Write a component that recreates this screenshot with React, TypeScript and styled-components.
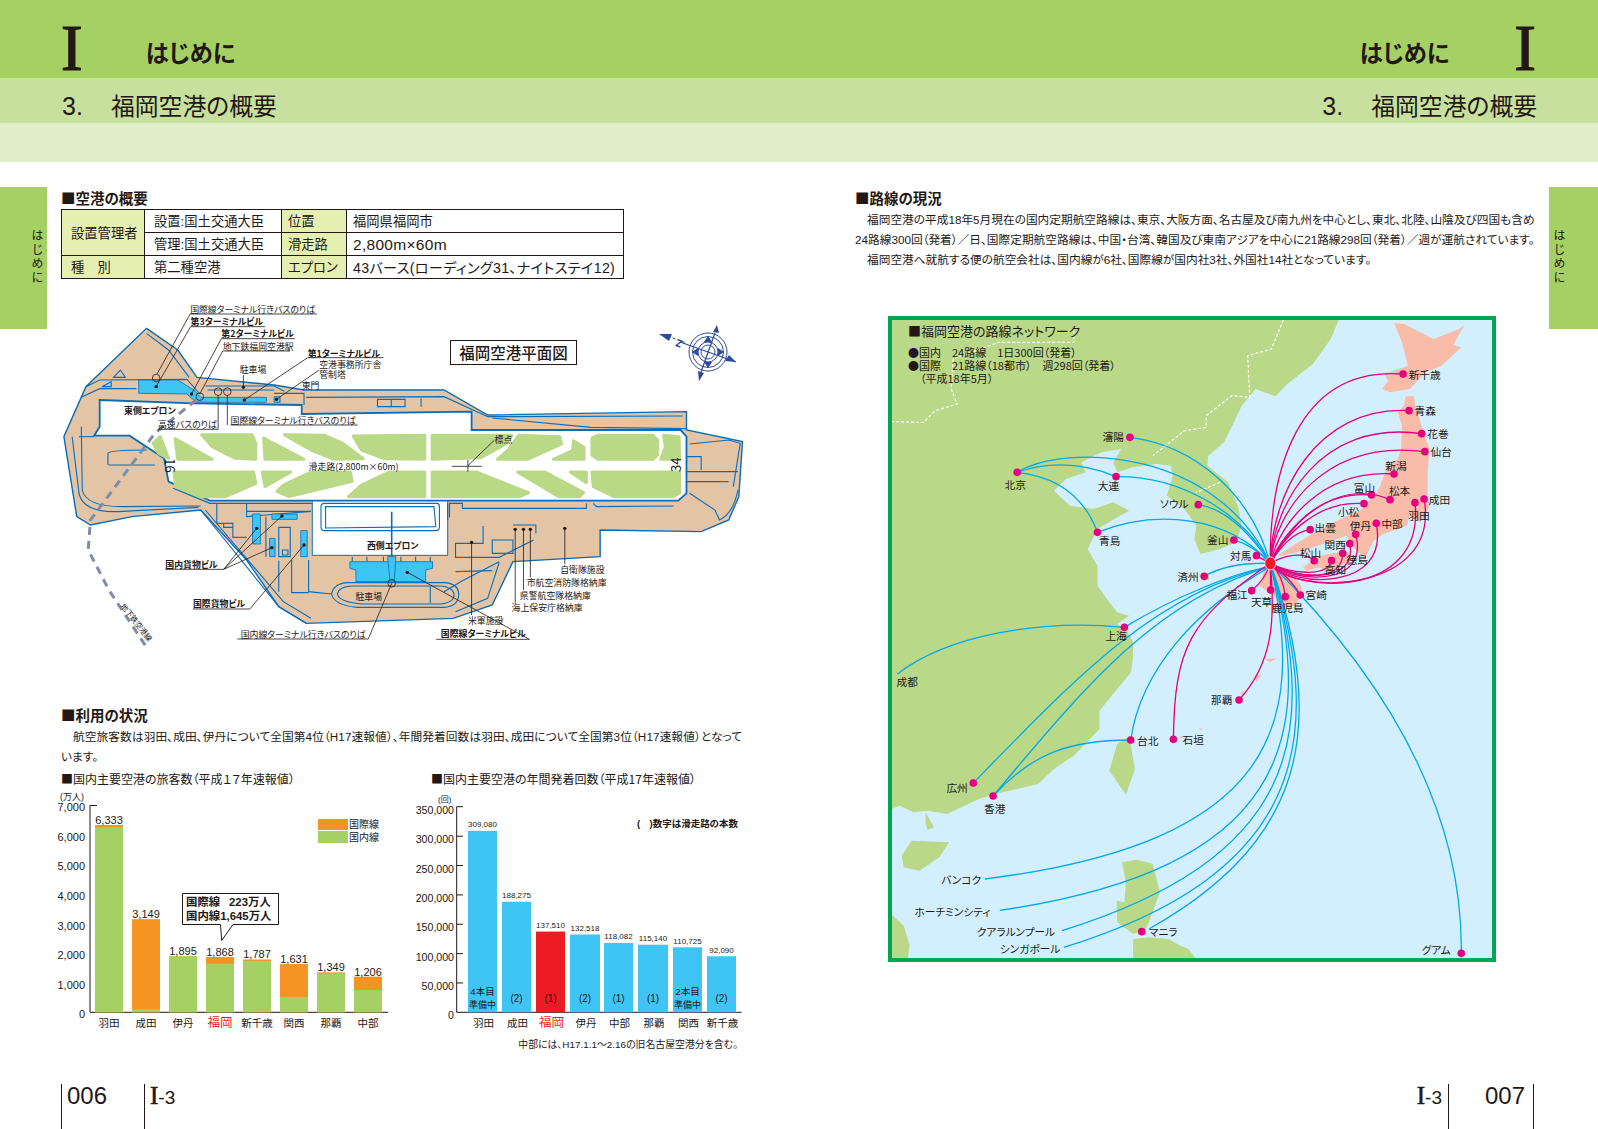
import styled, { createGlobalStyle } from "styled-components";

const SANS = `"Liberation Sans", "Noto Sans CJK JP", sans-serif`;
const CJK = `"Noto Sans CJK JP", "Liberation Sans", sans-serif`;

const GlobalStyle = createGlobalStyle`
  html, body {
    margin: 0;
    padding: 0;
    background: #fff;
  }
  body {
    font-family: ${SANS};
    font-feature-settings: "palt";
    color: #231815;
  }
`;

// ---- airport plan, drawn in crop coordinates (see ax / ay)
const ax = (z: number) => 40 + z / 2.178;
const ay = (z: number) => 290 + z / 3;

const GRASS = [
  "M262 440 L280 505 L258 490 L246 460 Z",
  "M294 446 L375 508 L300 508 Z",
  "M352 434 L462 434 L470 460 L470 508 L425 505 L375 470 Z",
  "M487 444 L575 508 L490 508 Z",
  "M532 434 L620 436 L660 460 L704 506 L640 508 L590 480 Z",
  "M682 438 L838 436 L838 508 L750 506 L700 480 Z",
  "M854 436 L1028 436 L1015 462 L960 503 L854 508 Z",
  "M1042 436 L1132 440 L1136 462 L1062 508 L996 508 L1020 480 Z",
  "M1162 452 L1185 472 L1185 508 L1118 508 L1160 482 Z",
  "M1202 444 L1215 436 L1335 436 L1345 450 L1345 495 L1335 508 L1215 508 L1202 495 Z",
  "M1358 436 L1392 440 L1393 508 L1352 508 L1362 470 Z",
  "M292 546 L465 546 L470 580 L404 620 L335 620 L295 590 Z",
  "M484 546 L546 546 L490 590 Z",
  "M590 546 L676 546 L680 574 L542 620 L516 604 L530 585 Z",
  "M760 546 L838 546 L838 620 L672 620 L700 585 Z",
  "M854 546 L950 546 L1064 608 L1045 620 L854 620 Z",
  "M1040 546 L1100 546 L1184 608 L1175 620 L1130 620 Z",
  "M1155 546 L1190 546 L1190 578 Z",
  "M1202 546 L1393 546 L1393 608 L1380 620 L1250 620 L1205 590 Z",
];

const ROADS = [
  "M232 130 L280 180 L325 262",
  "M100 290 L130 270 L320 268 L348 312",
  "M90 322 L130 296 L210 296",
  "M135 290 L155 275 L155 290 Z",
  "M160 262 L186 262 L175 240 Z",
  "M360 288 L510 288 L532 304",
  "M365 300 L510 300",
  "M510 310 L575 310 L575 345",
  "M580 322 L880 320 L975 380 L1400 378",
  "M985 384 L1200 412 L1408 416",
  "M735 328 L795 328 L795 350 L735 350 Z",
  "M765 328 L765 350",
  "M830 325 L830 350",
  "M70 440 L85 610 Q95 672 180 664 L345 652",
  "M90 410 L92 600 Q100 650 180 650 L350 648",
  "M118 440 L85 440",
  "M148 525 L148 490 Q150 480 232 480",
  "M150 525 L250 525",
  "M290 595 L370 640 L592 640",
  "M385 640 L385 700 L420 700 L420 742 L450 742",
  "M400 700 L400 712 L420 712",
  "M450 640 L450 680 L590 664",
  "M450 664 L590 664",
  "M492 680 L492 800",
  "M520 712 L545 712 L545 800 L520 800 Z",
  "M528 780 L540 780 L540 795 L528 795 Z",
  "M520 812 L520 905",
  "M548 810 L548 908 L585 908",
  "M585 810 L585 905 L635 912",
  "M350 660 L520 950 L580 1000",
  "M360 660 L530 935 L590 985",
  "M615 640 L865 640 Q870 640 870 650 L870 710 Q870 722 860 722 L620 722 Q612 722 612 710 L612 650 Q612 640 620 640 Z",
  "M622 650 L858 650 L862 710 L622 714 Z",
  "M670 878 L880 878 Q912 880 912 915 Q910 950 880 952 L690 952 Q640 945 635 912 Q640 880 670 878",
  "M680 888 L870 888 Q900 890 902 915 Q900 940 870 942 L700 942 Q650 935 648 912 Q650 890 680 888",
  "M850 890 L850 940",
  "M680 800 L680 815 M712 800 L712 815 M748 800 L748 815 M786 800 L786 815 M818 800 L818 815 M850 800 L850 815",
  "M888 640 L888 690",
  "M892 682 L892 640 L920 640 L920 655 L1190 655 L1190 640",
  "M1205 640 L1212 650 L1380 648",
  "M965 708 L965 760 L905 760 L905 802 L1000 802 L1075 750",
  "M1030 705 L1080 705 L1080 730",
  "M985 750 L1030 750 L1030 790 L985 790 Z",
  "M1000 815 L920 872 L880 905",
  "M905 845 L985 842",
  "M1000 818 L975 925 L905 965",
  "M1415 462 L1500 450 L1525 460 L1510 590",
  "M1408 545 L1520 545",
  "M1408 575 L1500 575",
  "M1415 610 L1470 660 L1480 690 Q1510 670 1520 600",
  "M1440 540 L1440 500 L1408 500",
];

const AIRPORT_LEADERS = [
  "M327 72 L603 72 M327 72 L255 252",
  "M328 110 L490 110 M328 110 L253 290",
  "M395 146 L555 146 M395 146 L330 312",
  "M398 183 L545 183 M398 183 L348 312",
  "M583 203 L748 203 M583 203 L445 330",
  "M608 240 L515 328",
  "M443 255 L443 292",
  "M257 418 L388 418 L388 316",
  "M415 405 L692 405 M408 405 L408 316",
  "M990 450 L932 527",
  "M897 529 L962 529 M932 510 L932 545",
  "M273 838 L400 838 L472 715 M400 838 L505 773 M400 838 L527 678",
  "M333 957 L457 957 L575 765",
  "M1143 715 L1143 822",
  "M1068 718 L1068 862",
  "M1053 718 L1053 900",
  "M1035 718 L1035 938",
  "M940 757 L940 975",
  "M430 1047 L715 1047 L766 880",
  "M863 1048 L1066 1048 L800 847",
];

const AIRPORT_DOTS = [
  [253, 290], [330, 312], [445, 330], [515, 328], [443, 292], [472, 715], [505, 773],
  [527, 678], [575, 765], [1143, 715], [1068, 718], [1053, 718], [1035, 718], [940, 757], [800, 847],
];

const AIRPORT_RINGS = [[253, 264], [348, 320], [388, 305], [408, 305], [766, 880]];

const AIRPORT_LABELS: { t: string; x: number; y: number; b?: boolean }[] = [
  { t: "国際線ターミナル行きバスのりば", x: 327, y: 58 },
  { t: "第3ターミナルビル", x: 328, y: 95, b: true },
  { t: "第2ターミナルビル", x: 395, y: 131, b: true },
  { t: "地下鉄福岡空港駅", x: 398, y: 168 },
  { t: "第1ターミナルビル", x: 583, y: 189, b: true },
  { t: "駐車場", x: 435, y: 238 },
  { t: "東門", x: 570, y: 287 },
  { t: "東側エプロン", x: 183, y: 362, b: true },
  { t: "高速バスのりば", x: 257, y: 404 },
  { t: "国際線ターミナル行きバスのりば", x: 415, y: 390 },
  { t: "標点", x: 990, y: 447 },
  { t: "滑走路(2,800m×60m)", x: 585, y: 528 },
  { t: "西側エプロン", x: 712, y: 765, b: true },
  { t: "国内貨物ビル", x: 273, y: 822, b: true },
  { t: "国際貨物ビル", x: 333, y: 940, b: true },
  { t: "駐車場", x: 687, y: 918 },
  { t: "自衛隊施設", x: 1133, y: 838 },
  { t: "市航空消防隊格納庫", x: 1060, y: 877 },
  { t: "県警航空隊格納庫", x: 1045, y: 915 },
  { t: "海上保安庁格納庫", x: 1027, y: 953 },
  { t: "米軍施設", x: 932, y: 990 },
  { t: "国内線ターミナル行きバスのりば", x: 437, y: 1032 },
  { t: "国際線ターミナルビル", x: 873, y: 1030, b: true },
];

// ---- route map, drawn in crop coordinates (see mx / my)
const mx = (z: number) => 880 + z / 2.529;
const my = (z: number) => 310 + z / 3;

const LAND = [
  "M28 33 L1160 33 L1140 90 L1095 165 L1030 225 L1000 262 L950 240 L915 290 L895 340 L870 400 L830 440 L828 470 L880 520 L905 590 L915 650 L900 700 L860 720 L810 735 L795 690 L800 650 L770 600 L725 560 L740 500 L735 470 L700 465 L640 475 L600 490 L590 460 L610 420 L560 430 L510 460 L520 490 L470 510 L440 545 L480 590 L540 600 L590 580 L630 605 L600 625 L550 660 L525 720 L550 770 L550 830 L580 880 L600 910 L630 920 L600 945 L625 965 L640 1000 L640 1045 L635 1090 L600 1140 L555 1205 L555 1260 L490 1340 L440 1380 L400 1425 L310 1450 L250 1470 L170 1515 L120 1505 L85 1510 L50 1490 L28 1500 Z",
  "M115 1510 L137 1555 L120 1563 L115 1540 Z",
  "M55 1640 L80 1595 L175 1600 L150 1645 L100 1685 L60 1675 Z",
  "M630 1282 L645 1380 L622 1457 L580 1385 L600 1305 Z",
  "M612 1660 L650 1652 L690 1665 L708 1750 L680 1840 L670 1865 L640 1875 L600 1840 L598 1775 L618 1780 L622 1720 Z",
  "M640 1890 L680 1885 L730 1890 L760 1910 L780 1920 L800 1950 L640 1950 Z",
  "M28 1815 L60 1850 L75 1910 L70 1950 L28 1950 Z",
  "M808 796 L832 796 L832 812 L815 815 Z",
];

const JAPAN = [
  "M1300 42 L1325 45 L1400 90 L1465 60 L1478 48 L1450 108 L1470 115 L1420 170 L1380 190 L1340 240 L1290 250 L1270 240 L1285 215 L1275 195 L1335 170 L1320 100 Z",
  "M1330 262 L1350 262 L1355 295 L1380 390 L1390 420 L1385 490 L1385 565 L1391 590 L1366 640 L1340 620 L1332 650 L1273 675 L1248 695 L1226 750 L1189 705 L1180 680 L1071 725 L1010 742 L1011 735 L1092 675 L1155 635 L1214 605 L1256 550 L1265 530 L1280 480 L1310 450 L1318 420 L1320 350 L1310 310 L1325 290 Z",
  "M1070 775 L1112 740 L1180 725 L1193 750 L1172 765 L1138 795 L1113 775 L1079 785 Z",
  "M985 770 L1010 775 L1045 800 L1065 830 L1065 860 L1050 890 L1020 895 L995 860 L960 830 L970 790 Z",
  "M950 1095 L965 1100 L950 1120 Z",
  "M975 1050 L1005 1048 L985 1060 Z",
  "M915 1145 L925 1150 L912 1160 Z",
  "M760 1280 L770 1282 L760 1290 Z",
  "M805 1255 L815 1260 L810 1265 Z",
];

const BORDERS = [
  "M28 338 L110 340 L140 305 L195 285 L180 240 L185 150 L300 100 L400 100 L490 100 L490 60",
  "M1020 33 L990 120 L930 140 L935 265 L890 260 L825 320 L825 355 L770 365 L690 440",
  "M860 520 L800 550",
];

const PINK = [
  "M987 763 C985 500 1050 170 1323 195",
  "M987 763 C990 560 1100 290 1338 305",
  "M987 763 C995 590 1110 330 1370 374",
  "M987 763 C1000 610 1120 390 1378 428",
  "M987 763 C1010 640 1120 480 1300 495",
  "M987 763 C1030 670 1100 545 1243 558",
  "M987 763 C1020 660 1150 500 1290 572",
  "M987 763 C1010 700 1100 570 1224 584",
  "M987 763 C1010 720 1040 670 1088 662",
  "M987 763 C1020 740 1070 725 1098 755",
  "M987 763 C1030 790 1130 810 1142 755",
  "M987 763 C1040 800 1170 830 1170 733",
  "M987 763 C1040 810 1210 830 1188 704",
  "M987 763 C1040 820 1240 840 1203 676",
  "M987 763 C1040 835 1290 850 1255 643",
  "M987 763 C1040 850 1380 880 1353 581",
  "M987 763 C1040 860 1420 860 1376 570",
  "M987 763 Q1040 810 1063 858",
  "M987 763 Q1020 800 1025 863",
  "M987 763 L988 843",
  "M987 763 Q975 810 940 845",
  "M987 763 L952 740",
  "M987 763 C1000 930 995 1060 908 1173",
  "M987 763 C780 930 745 1020 742 1291",
];

const BLUE = [
  "M632 385 C800 410 940 560 987 763",
  "M347 490 C470 400 850 420 987 763",
  "M347 490 Q470 440 597 503",
  "M347 490 Q500 510 550 670",
  "M597 503 C750 500 910 600 987 763",
  "M805 587 C880 600 940 680 987 763",
  "M550 670 C700 600 880 620 987 763",
  "M895 693 Q945 710 987 763",
  "M820 802 Q880 760 987 763",
  "M618 955 C750 860 900 790 987 773",
  "M618 955 C400 930 170 980 44 1095",
  "M987 773 C700 850 500 1100 236 1422",
  "M987 773 C700 870 520 1130 286 1461",
  "M286 1461 C380 1340 470 1293 634 1293",
  "M987 773 C800 900 660 1080 634 1293",
  "M987 763 C1080 1250 1000 1600 265 1710",
  "M987 763 C1110 1300 1020 1680 303 1804",
  "M987 763 C1120 1300 1040 1650 460 1865",
  "M987 763 C1140 1320 1050 1700 465 1915",
  "M987 763 C1150 1300 1040 1620 680 1860",
  "M987 763 C1280 1110 1475 1500 1470 1933",
];

const CITY_DOTS = [
  [1323, 195], [1338, 305], [1370, 374], [1378, 428], [1300, 495], [1243, 558], [1290, 572], [1224, 584],
  [1353, 581], [1376, 570], [1255, 643], [1203, 676], [1088, 662], [1188, 704], [1170, 733], [1142, 755],
  [1098, 755], [1063, 858], [1025, 863], [988, 843], [940, 845], [952, 740], [895, 693], [820, 802],
  [805, 587], [632, 385], [597, 503], [347, 490], [550, 670], [618, 955], [908, 1173], [634, 1293],
  [742, 1291], [236, 1422], [286, 1461], [662, 1868], [1470, 1933],
];

const CITIES: [string, number, number][] = [
  ["新千歳", 1337, 195], ["青森", 1352, 305], ["花巻", 1384, 374], ["仙台", 1392, 428], ["新潟", 1278, 470],
  ["富山", 1198, 535], ["松本", 1287, 545], ["成田", 1388, 570], ["羽田", 1336, 618], ["小松", 1158, 607],
  ["伊丹", 1188, 648], ["中部", 1268, 643], ["出雲", 1099, 655], ["関西", 1124, 705], ["松山", 1062, 730],
  ["徳島", 1180, 752], ["高知", 1125, 782], ["宮崎", 1076, 857], ["福江", 876, 855], ["天草", 938, 878],
  ["鹿児島", 990, 895], ["対馬", 885, 740], ["釜山", 827, 692], ["済州", 752, 802], ["ソウル", 708, 582],
  ["瀋陽", 563, 382], ["大連", 551, 530], ["北京", 315, 526], ["青島", 554, 694], ["上海", 570, 978],
  ["成都", 42, 1118], ["那覇", 837, 1172], ["台北", 650, 1294], ["石垣", 765, 1292], ["広州", 168, 1434],
  ["香港", 263, 1498], ["バンコク", 155, 1710], ["ホーチミンシティ", 87, 1806], ["クアラルンプール", 245, 1868],
  ["シンガポール", 303, 1918], ["マニラ", 680, 1868], ["グアム", 1370, 1922],
];

// ---- charts
const PASSENGERS = [
  { name: "羽田", label: "6,333", total: 6333, domestic: 6260 },
  { name: "成田", label: "3,149", total: 3149, domestic: 100 },
  { name: "伊丹", label: "1,895", total: 1895, domestic: 1895 },
  { name: "福岡", label: "1,868", total: 1868, domestic: 1645, hot: true },
  { name: "新千歳", label: "1,787", total: 1787, domestic: 1740 },
  { name: "関西", label: "1,631", total: 1631, domestic: 520 },
  { name: "那覇", label: "1,349", total: 1349, domestic: 1315 },
  { name: "中部", label: "1,206", total: 1206, domestic: 750 },
];

const FLIGHTS = [
  { name: "羽田", label: "309,080", n: 309080, x: 468, w: 29, note: ["4本目", "準備中"] },
  { name: "成田", label: "188,275", n: 188275, x: 502, w: 29, note: ["(2)"] },
  { name: "福岡", label: "137,510", n: 137510, x: 536, w: 29, note: ["(1)"], hot: true },
  { name: "伊丹", label: "132,518", n: 132518, x: 570, w: 30, note: ["(2)"] },
  { name: "中部", label: "118,082", n: 118082, x: 604, w: 29, note: ["(1)"] },
  { name: "那覇", label: "115,140", n: 115140, x: 638, w: 30, note: ["(1)"] },
  { name: "関西", label: "110,725", n: 110725, x: 673, w: 29, note: ["2本目", "準備中"] },
  { name: "新千歳", label: "92,090", n: 95500, x: 707, w: 29, note: ["(2)"] },
];

const Page = styled.div`
  width: 1598px;
  height: 1129px;
  display: flex;
  flex-direction: column;
  overflow: hidden;
`;

const ChapterBand = styled.header`
  height: 78px;
  background: #a5d063;
  display: flex;
  justify-content: space-between;
  padding: 0 62px 0 61px;
`;

const ChapterGroup = styled.div<{ $gap: number }>`
  display: flex;
  align-items: center;
  gap: ${(p) => p.$gap}px;
`;

const ChapterMark = styled.span`
  font-family: "Liberation Serif", serif;
  font-size: 65px;
  line-height: 60px;
  margin-top: 18px;
  color: #231815;
  -webkit-text-stroke: 1.2px #231815;
`;

const ChapterTitle = styled.h1`
  margin: 26px 0 0;
  font-family: ${CJK};
  font-size: 23.3px;
  font-weight: 700;
  line-height: 30px;
`;

const SectionBand = styled.div`
  height: 45px;
  background: #c8e09e;
  display: flex;
  justify-content: space-between;
  align-items: center;
  padding: 8px 61px 0 62px;
  box-sizing: border-box;
`;

const SectionTitle = styled.h2`
  margin: 0;
  font-size: 23.8px;
  font-weight: 400;
  white-space: nowrap;
  display: flex;
  align-items: baseline;
`;

const SectionNumber = styled.span`
  width: 49px;
  font-size: 25px;
`;

const PaleBand = styled.div`
  height: 39px;
  background: #e0edc8;
`;

const Spread = styled.div`
  flex: 1;
  min-height: 0;
  display: flex;
`;

const Side = styled.section`
  width: 799px;
  display: flex;
`;

const Tab = styled.aside<{ $width: number; $inset: number }>`
  flex: none;
  width: ${(p) => p.$width}px;
  height: 142px;
  margin-top: 25px;
  background: #a5d063;
  display: flex;
  padding: 42px 0 0 ${(p) => p.$inset}px;
  box-sizing: border-box;
`;

const TabText = styled.span`
  writing-mode: vertical-rl;
  font-family: ${CJK};
  font-size: 12px;
  letter-spacing: 2.3px;
  line-height: 1;
`;

const Column = styled.div`
  flex: 1;
  min-width: 0;
  display: flex;
  flex-direction: column;
  padding-top: 26px;
`;

const LeftColumn = styled(Column)`
  margin-left: 14px;
`;

const RightColumn = styled(Column)`
  margin: 0 12px 0 56px;
`;

const Heading = styled.h3`
  margin: 0;
  font-family: ${CJK};
  font-size: 14.5px;
  line-height: 20px;
  font-weight: 700;
  white-space: nowrap;
`;

const OverviewTable = styled.table`
  width: 562px;
  margin-top: 1px;
  border-collapse: collapse;
  table-layout: fixed;
  font-size: 13.3px;
`;

const Cell = styled.td<{ $label?: boolean; $spread?: number; $size?: number }>`
  height: 23px;
  padding: 2px 0 0 6px;
  border: 1px solid #231815;
  background: ${(p) => (p.$label ? "#e6efb2" : "#fff")};
  white-space: nowrap;
  line-height: 20px;
  box-sizing: border-box;
  font-size: ${(p) => p.$size || 13.3}px;
  letter-spacing: ${(p) => p.$spread || 0}px;
`;

const LabelCell = styled(Cell)`
  padding-left: 9px;
`;

const GroupHead = styled(LabelCell).attrs({ as: "th" })`
  font-weight: 400;
  text-align: left;
`;

const PlanWrap = styled.div`
  position: relative;
  margin-top: 16px;
`;

const AirportSvg = styled.svg`
  display: block;
  width: 690px;
  height: 385px;
`;

const MapLabel = styled.text<{ $size: number; $bold?: boolean }>`
  font-family: ${CJK};
  font-size: ${(p) => p.$size}px;
  font-weight: ${(p) => (p.$bold ? 700 : 400)};
  dominant-baseline: central;
  fill: #231815;
`;

const CompassLetter = styled(MapLabel)`
  fill: #2f4a9a;
`;

const PlanTitle = styled.div`
  position: absolute;
  left: 389px;
  top: 45px;
  width: 127px;
  height: 25px;
  box-sizing: border-box;
  border: 1.5px solid #231815;
  background: #fff;
  font-family: ${CJK};
  font-size: 15.5px;
  font-weight: 500;
  line-height: 22px;
  text-align: center;
  white-space: nowrap;
`;

const Heading2 = styled(Heading)`
  margin-top: 25px;
`;

const Body = styled.p<{ $spread?: number }>`
  margin: 2px 0 0;
  font-size: 11.7px;
  line-height: 20px;
  white-space: nowrap;
  letter-spacing: ${(p) => p.$spread || 0}px;
`;

const Indent = styled.span`
  display: inline-block;
  width: 12px;
`;

const ChartRow = styled.div`
  display: flex;
  margin-top: 4px;
`;

const ChartColumn = styled.div<{ $width: number }>`
  width: ${(p) => p.$width}px;
  flex: none;
`;

const ChartTitle = styled.h4`
  margin: 0;
  font-family: ${CJK};
  font-size: 12px;
  line-height: 16px;
  font-weight: 400;
  white-space: nowrap;
`;

const ChartSvg = styled.svg`
  display: block;
  overflow: visible;
`;

const ChartText = styled.text<{ $size: number; $color?: string; $bold?: boolean }>`
  font-size: ${(p) => p.$size}px;
  font-weight: ${(p) => (p.$bold ? 700 : 400)};
  fill: ${(p) => p.$color || "#231815"};
  dominant-baseline: central;
`;

const Footer = styled.footer`
  margin-top: auto;
  height: 45px;
  flex: none;
  display: flex;
`;

const RightFooter = styled(Footer)`
  justify-content: flex-end;
  margin-right: 3px;
`;

const FooterCell = styled.div<{ $width: number; $edge: "left" | "right"; $pad: number }>`
  width: ${(p) => p.$width}px;
  box-sizing: border-box;
  border-${(p) => p.$edge}: 1px solid #231815;
  padding-${(p) => p.$edge}: ${(p) => p.$pad}px;
  text-align: ${(p) => p.$edge};
  line-height: 24px;
`;

const PageNo = styled.span`
  font-size: 24px;
`;

const PartRef = styled.span`
  font-size: 19px;
`;

const PartMark = styled.span`
  font-family: "Liberation Serif", serif;
  font-size: 25px;
  -webkit-text-stroke: 0.6px #231815;
`;

const NetworkFrame = styled.div`
  width: 608px;
  height: 646px;
  margin: 46px 0 0 33px;
  box-sizing: border-box;
  border: 4px solid #00a651;
  background: #d3effe;
`;

const NetworkSvg = styled.svg`
  display: block;
  width: 600px;
  height: 638px;
`;

const AirportPlan = () => (
  <PlanWrap>
    <AirportSvg viewBox="61 295 690 385">
      <g transform="translate(40 290) scale(0.45914 0.33333)">
        <path
          d="M232 115 L300 180 L342 262 L510 285 L575 300 L880 300 L975 375 L1408 365 L1408 420 L1530 455 L1522 620 L1500 690 L1440 725 L1220 720 L1220 800 L1030 815 L985 945 L900 985 L580 1000 L520 950 L450 810 L350 660 L200 680 L110 705 L80 680 L52 440 L100 290 Z"
          fill="#e3c5a6"
          stroke="#0a6cb8"
          strokeWidth="1.4"
          vectorEffect="non-scaling-stroke"
        />
        <path
          d="M130 330 L335 340 L570 345 L570 372 L940 365 L940 420 L1395 420 L1408 440 L1408 610 L1390 632 L370 632 L280 575 L270 505 L195 437 L118 437 L130 410 Z"
          fill="#fff"
          stroke="#0a6cb8"
          strokeWidth="1.8"
          vectorEffect="non-scaling-stroke"
        />
        <path d="M593 633 L888 633 L888 796 L593 796 Z" fill="#fff" stroke="#0a6cb8" strokeWidth="1" vectorEffect="non-scaling-stroke" />
        {GRASS.map((d) => (
          <path key={d} d={d} fill="#b9d987" stroke="#b9d987" strokeWidth="3" strokeLinejoin="round" vectorEffect="non-scaling-stroke" />
        ))}
        {ROADS.map((d) => (
          <path key={d} d={d} fill="none" stroke="#0a6cb8" strokeWidth="1.1" vectorEffect="non-scaling-stroke" />
        ))}
        <g fill="#3ec5f5" stroke="#0a6cb8" strokeWidth="0.8">
          <path d="M215 270 L300 270 L335 300 L350 322 L493 322 L493 337 L340 337 L320 312 L215 310 Z" vectorEffect="non-scaling-stroke" />
          <path d="M510 320 L523 320 L523 337 L510 337 Z" vectorEffect="non-scaling-stroke" />
          <path d="M675 815 L855 815 L855 835 L840 840 L840 875 L688 875 L688 840 L675 835 Z" vectorEffect="non-scaling-stroke" />
          <path d="M757 800 L775 800 L772 870 L762 870 Z" vectorEffect="non-scaling-stroke" />
          <path d="M463 672 L480 672 L480 762 L463 762 Z" vectorEffect="non-scaling-stroke" />
          <path d="M505 672 L560 672 L560 688 L505 688 Z" vectorEffect="non-scaling-stroke" />
          <path d="M500 745 L512 745 L512 800 L500 800 Z" vectorEffect="non-scaling-stroke" />
          <path d="M568 722 L582 722 L582 800 L568 800 Z" vectorEffect="non-scaling-stroke" />
        </g>
        <path d="M766 665 L766 800" stroke="#0a6cb8" strokeWidth="1.6" vectorEffect="non-scaling-stroke" />
        <path
          d="M340 330 L250 430 L110 690 L105 780 L150 900 L235 1078"
          fill="none"
          stroke="#7e8ca8"
          strokeWidth="3"
          strokeDasharray="8 6"
          vectorEffect="non-scaling-stroke"
        />
        {AIRPORT_LEADERS.map((d) => (
          <path key={d} d={d} fill="none" stroke="#231815" strokeWidth="0.8" vectorEffect="non-scaling-stroke" />
        ))}
      </g>
      {AIRPORT_DOTS.map(([x, y]) => (
        <circle key={`${x}-${y}`} cx={ax(x)} cy={ay(y)} r="1.7" fill="#231815" />
      ))}
      {AIRPORT_RINGS.map(([x, y]) => (
        <circle key={`${x}-${y}`} cx={ax(x)} cy={ay(y)} r="3.8" fill="none" stroke="#231815" strokeWidth="0.8" />
      ))}
      {AIRPORT_LABELS.map((l) => (
        <MapLabel key={`${l.t}-${l.x}`} x={ax(l.x)} y={ay(l.y)} $size={8.9} $bold={l.b}>
          {l.t}
        </MapLabel>
      ))}
      <MapLabel x={ax(608)} y={ay(224)} $size={8.9}>
        空港事務所庁舎
        <tspan x={ax(608)} dy="9.7">
          管制塔
        </tspan>
      </MapLabel>
      <MapLabel x={0} y={0} $size={13} transform={`translate(${ax(284)} ${ay(505)}) rotate(90)`}>
        16
      </MapLabel>
      <MapLabel x={0} y={0} $size={13} transform={`translate(${ax(1385)} ${ay(546)}) rotate(-90)`}>
        34
      </MapLabel>
      <MapLabel x={0} y={0} $size={7.6} transform="translate(123 604) rotate(52)">
        地下鉄空港線
      </MapLabel>
      <g fill="none" stroke="#2f4a9a" strokeWidth="1">
        <circle cx="708" cy="352" r="19" />
        <circle cx="708" cy="352" r="15.5" />
        <circle cx="708" cy="352" r="10" />
        <circle cx="708" cy="352" r="7" />
        <path d="M680 342 L736 362 M715 333 L701 372" strokeWidth="1.2" />
        <path d="M668 336 L686 343" strokeDasharray="3 2" />
      </g>
      <g fill="#2f4a9a">
        <path d="M659 334 L672 334 L669 341 Z" />
        <path d="M717 325 L719 333 L713 332 Z" />
        <path d="M736 362 L725 361 L729 355 Z" />
        <path d="M699 381 L698 371 L704 373 Z" />
        <path d="M708 336 L712 342 L704 342 Z M708 368 L712 362 L704 362 Z M692 352 L698 348 L698 356 Z M724 352 L718 348 L718 356 Z" />
      </g>
      <CompassLetter x={676} y={343} $size={10} $bold transform="rotate(20 680 343)">
        Z
      </CompassLetter>
    </AirportSvg>
    <PlanTitle>福岡空港平面図</PlanTitle>
  </PlanWrap>
);

const PassengerChart = () => {
  const base = 1012.3;
  const scale = 0.02957;
  const barX = (i: number) => 95 + i * 37;
  return (
    <ChartSvg width="350" height="270" viewBox="61 787 350 270">
      <path d="M97 805.5 L90 805.5 L90 1012.3 L388 1012.3" fill="none" stroke="#231815" strokeWidth="1" />
      {[0, 1000, 2000, 3000, 4000, 5000, 6000, 7000].map((v) => (
        <ChartText key={v} x={85} y={base - v * scale + 2} $size={11} textAnchor="end">
          {v ? v.toLocaleString("en-US") : "0"}
        </ChartText>
      ))}
      <ChartText x={60} y={797} $size={9}>(万人)</ChartText>
      {PASSENGERS.map((d, i) => (
        <g key={d.name}>
          <rect x={barX(i)} y={base - d.total * scale} width="28" height={d.total * scale} fill="#f39423" />
          <rect x={barX(i)} y={base - d.domestic * scale} width="28" height={d.domestic * scale} fill="#a5d063" />
          <ChartText x={barX(i) + 14} y={base - d.total * scale - 5} $size={11} textAnchor="middle">
            {d.label}
          </ChartText>
          <ChartText
            x={barX(i) + 14}
            y={1022.8}
            $size={d.hot ? 12.5 : 10.5}
            $color={d.hot ? "#ed1c24" : undefined}
            textAnchor="middle"
          >
            {d.name}
          </ChartText>
        </g>
      ))}
      <rect x="318" y="819" width="30" height="11" fill="#f39423" />
      <rect x="318" y="831" width="30" height="12" fill="#a5d063" />
      <ChartText x={349} y={824.5} $size={10}>国際線</ChartText>
      <ChartText x={349} y={837} $size={10}>国内線</ChartText>
      <path
        d="M182.5 893.5 L278.5 893.5 L278.5 924.5 L233 924.5 L221.7 940.5 L220.5 924.5 L182.5 924.5 Z"
        fill="#fff"
        stroke="#231815"
        strokeWidth="1"
      />
      <ChartText x={186} y={901.5} $size={11.4} $bold>国際線</ChartText>
      <ChartText x={229} y={901.5} $size={11.4} $bold>223万人</ChartText>
      <ChartText x={186} y={915.5} $size={11.4} $bold>国内線1,645万人</ChartText>
    </ChartSvg>
  );
};

const FlightChart = () => {
  const base = 1012.3;
  const scale = 0.000587;
  return (
    <ChartSvg width="320" height="270" viewBox="431 787 320 270">
      <path d="M463 806.7 L456.7 806.7 L456.7 1012.3 L741.7 1012.3" fill="none" stroke="#231815" strokeWidth="1" />
      {[50000, 100000, 150000, 200000, 250000, 300000].map((v) => (
        <path key={v} d={`M456.7 ${base - v * scale} L463 ${base - v * scale}`} stroke="#231815" strokeWidth="1" />
      ))}
      {[0, 50000, 100000, 150000, 200000, 250000, 300000, 350000].map((v) => (
        <ChartText key={v} x={454} y={base - v * scale + 3} $size={10.6} textAnchor="end">
          {v ? v.toLocaleString("en-US") : "0"}
        </ChartText>
      ))}
      <ChartText x={438} y={799} $size={8}>(回)</ChartText>
      <ChartText x={738} y={823} $size={9.5} $bold textAnchor="end">(　)数字は滑走路の本数</ChartText>
      {FLIGHTS.map((d) => (
        <g key={d.name}>
          <rect x={d.x} y={base - d.n * scale} width={d.w} height={d.n * scale} fill={d.hot ? "#ed1c24" : "#3ec5f5"} />
          <ChartText x={d.x + d.w / 2} y={base - d.n * scale - 6} $size={8} textAnchor="middle">
            {d.label}
          </ChartText>
          {d.note.length > 1 ? (
            <>
              <ChartText x={d.x + d.w / 2} y={991.5} $size={9.5} textAnchor="middle">{d.note[0]}</ChartText>
              <ChartText x={d.x + d.w / 2} y={1004.5} $size={9} textAnchor="middle">{d.note[1]}</ChartText>
            </>
          ) : (
            <ChartText x={d.x + d.w / 2} y={998.5} $size={10} textAnchor="middle">{d.note[0]}</ChartText>
          )}
          <ChartText
            x={d.x + d.w / 2 + 1}
            y={1023}
            $size={d.hot ? 12.5 : 10.5}
            $color={d.hot ? "#ed1c24" : undefined}
            textAnchor="middle"
          >
            {d.name}
          </ChartText>
        </g>
      ))}
      <ChartText x={738} y={1044.5} $size={9.9} textAnchor="end">中部には、H17.1.1～2.16の旧名古屋空港分を含む。</ChartText>
    </ChartSvg>
  );
};

const RouteMap = () => (
  <NetworkFrame>
    <NetworkSvg viewBox="892 321 600 638">
      <g transform="translate(880 310) scale(0.39541 0.33333)">
        {LAND.map((d) => (
          <path key={d} d={d} fill="#b9d888" />
        ))}
        {JAPAN.map((d) => (
          <path key={d} d={d} fill="#f9bca8" />
        ))}
        {BORDERS.map((d) => (
          <path key={d} d={d} fill="none" stroke="#fff" strokeWidth="1.2" strokeDasharray="3 2" vectorEffect="non-scaling-stroke" />
        ))}
        {BLUE.map((d) => (
          <path key={d} d={d} fill="none" stroke="#00a9e8" strokeWidth="1.3" vectorEffect="non-scaling-stroke" />
        ))}
        {PINK.map((d) => (
          <path key={d} d={d} fill="none" stroke="#e4007f" strokeWidth="1.3" vectorEffect="non-scaling-stroke" />
        ))}
      </g>
      {CITY_DOTS.map(([x, y]) => (
        <circle key={`${x}-${y}`} cx={mx(x)} cy={my(y)} r="3.8" fill="#e4007f" />
      ))}
      <ellipse cx={mx(987)} cy={my(763)} rx="5.5" ry="6.5" fill="#ed1c24" stroke="#fff" strokeWidth="0.8" />
      {CITIES.map(([t, x, y]) => (
        <MapLabel key={t} x={mx(x)} y={my(y)} $size={10.7}>
          {t}
        </MapLabel>
      ))}
      <MapLabel x={908} y={331} $size={13}>■福岡空港の路線ネットワーク</MapLabel>
      <MapLabel x={908} y={352.5} $size={11}>●国内　24路線　1日300回（発着）</MapLabel>
      <MapLabel x={908} y={366} $size={11}>●国際　21路線（18都市）　週298回（発着）</MapLabel>
      <MapLabel x={920} y={379} $size={11}>（平成18年5月）</MapLabel>
    </NetworkSvg>
  </NetworkFrame>
);

export default function App() {
  return (
    <Page>
      <GlobalStyle />
      <ChapterBand>
        <ChapterGroup $gap={63}>
          <ChapterMark>I</ChapterMark>
          <ChapterTitle>はじめに</ChapterTitle>
        </ChapterGroup>
        <ChapterGroup $gap={65}>
          <ChapterTitle>はじめに</ChapterTitle>
          <ChapterMark>I</ChapterMark>
        </ChapterGroup>
      </ChapterBand>
      <SectionBand>
        <SectionTitle>
          <SectionNumber>3.</SectionNumber>福岡空港の概要
        </SectionTitle>
        <SectionTitle>
          <SectionNumber>3.</SectionNumber>福岡空港の概要
        </SectionTitle>
      </SectionBand>
      <PaleBand />
      <Spread>
        <Side>
          <Tab $width={47} $inset={31}>
            <TabText>はじめに</TabText>
          </Tab>
          <LeftColumn>
            <Heading>■空港の概要</Heading>
            <OverviewTable>
              <colgroup>
                <col width="83" />
                <col width="137" />
                <col width="65" />
                <col width="277" />
              </colgroup>
              <tbody>
                <tr>
                  <GroupHead $label rowSpan={2}>
                    設置管理者
                  </GroupHead>
                  <LabelCell>設置:国土交通大臣</LabelCell>
                  <Cell $label>位置</Cell>
                  <Cell>福岡県福岡市</Cell>
                </tr>
                <tr>
                  <LabelCell>管理:国土交通大臣</LabelCell>
                  <Cell $label>滑走路</Cell>
                  <Cell $size={15.5} $spread={0.3}>2,800m×60m</Cell>
                </tr>
                <tr>
                  <LabelCell $label>種　別</LabelCell>
                  <LabelCell>第二種空港</LabelCell>
                  <Cell $label>エプロン</Cell>
                  <Cell $size={14.2} $spread={0.3}>43バース(ローディング31、ナイトステイ12)</Cell>
                </tr>
              </tbody>
            </OverviewTable>
            <AirportPlan />
            <Heading2>■利用の状況</Heading2>
            <Body $spread={0.09}>
              <Indent />
              航空旅客数は羽田、成田、伊丹について全国第4位（H17速報値）、年間発着回数は羽田、成田について全国第3位（H17速報値）となって
              <br />
              います。
            </Body>
            <ChartRow>
              <ChartColumn $width={370}>
                <ChartTitle>■国内主要空港の旅客数（平成１７年速報値）</ChartTitle>
                <PassengerChart />
              </ChartColumn>
              <ChartColumn $width={320}>
                <ChartTitle>■国内主要空港の年間発着回数（平成17年速報値）</ChartTitle>
                <FlightChart />
              </ChartColumn>
            </ChartRow>
            <Footer>
              <FooterCell $width={83} $edge="left" $pad={5}>
                <PageNo>006</PageNo>
              </FooterCell>
              <FooterCell $width={60} $edge="left" $pad={5}>
                <PartMark>I</PartMark>
                <PartRef>-3</PartRef>
              </FooterCell>
            </Footer>
          </LeftColumn>
        </Side>
        <Side>
          <RightColumn>
            <Heading>■路線の現況</Heading>
            <Body>
              <Indent />
              福岡空港の平成18年5月現在の国内定期航空路線は、東京、大阪方面、名古屋及び南九州を中心とし、東北、北陸、山陰及び四国も含め
              <br />
              24路線300回（発着）／日、国際定期航空路線は、中国・台湾、韓国及び東南アジアを中心に21路線298回（発着）／週が運航されています。
              <br />
              <Indent />
              福岡空港へ就航する便の航空会社は、国内線が6社、国際線が国内社3社、外国社14社となっています。
            </Body>
            <RouteMap />
            <RightFooter>
              <FooterCell $width={60} $edge="right" $pad={6}>
                <PartMark>I</PartMark>
                <PartRef>-3</PartRef>
              </FooterCell>
              <FooterCell $width={85} $edge="right" $pad={8}>
                <PageNo>007</PageNo>
              </FooterCell>
            </RightFooter>
          </RightColumn>
          <Tab $width={49} $inset={4}>
            <TabText>はじめに</TabText>
          </Tab>
        </Side>
      </Spread>
    </Page>
  );
}
